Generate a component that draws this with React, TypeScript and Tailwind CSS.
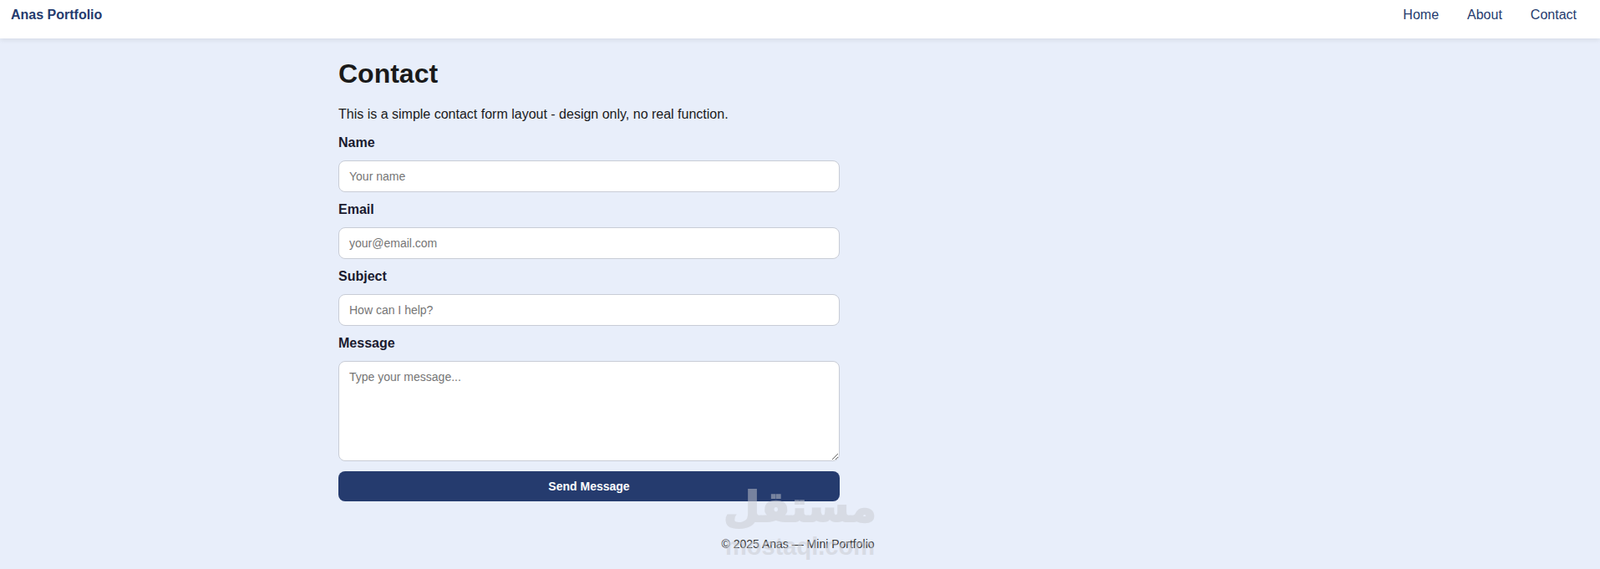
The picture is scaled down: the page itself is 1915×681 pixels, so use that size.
const fieldClass =
  'block w-full h-[38px] rounded-lg border border-[#c8ccd6] bg-white px-3 text-sm text-[#1a1a1a] placeholder:text-[#757575] outline-none';

const labelClass = 'block h-[24px] text-[16px] leading-[24px] font-bold text-[#1a1a2e]';

const FIELDS = [
  { label: 'Name', placeholder: 'Your name', type: 'text' },
  { label: 'Email', placeholder: 'your@email.com', type: 'email' },
  { label: 'Subject', placeholder: 'How can I help?', type: 'text' },
];

const App = () => {
  return (
    <div className="relative min-h-[681px] overflow-hidden bg-[#e8eefa] font-['Liberation_Sans',Arial,sans-serif] text-[#1a1a1a]">
      {/* Navbar */}
      <nav className="flex h-[46px] items-start justify-between bg-white pl-[13px] pr-[28px] shadow-[0_2px_6px_rgba(0,0,0,0.08)]">
        <a className="mt-[9px] text-[16px] leading-[18px] font-bold text-[#253b6e]">Anas Portfolio</a>
        <div className="mt-[9px] flex gap-[34px] text-[16px] leading-[18px] text-[#253b6e]">
          <a>Home</a>
          <a>About</a>
          <a>Contact</a>
        </div>
      </nav>

      {/* Form */}
      <main className="ml-[405px] w-[600px] pt-[24px]">
        <h1 className="text-[32px] leading-[37px] font-bold text-[#1a1a1a]">Contact</h1>
        <p className="mt-[21px] text-[16px] leading-[18px]">
          This is a simple contact form layout - design only, no real function.
        </p>
        <form className="mt-[13px]">
          {FIELDS.map((field) => (
            <div key={field.label} className="mb-[9px]">
              <label className={labelClass}>{field.label}</label>
              <input type={field.type} placeholder={field.placeholder} className={`${fieldClass} mt-[9px]`} />
            </div>
          ))}
          <label className={labelClass}>Message</label>
          <textarea
            placeholder="Type your message..."
            className="mt-[9px] block h-[120px] w-full rounded-lg border border-[#c8ccd6] bg-white px-3 py-2 text-sm text-[#1a1a1a] placeholder:text-[#757575] outline-none"
          />
          <button
            type="button"
            className="mt-[12px] block h-[36px] w-full rounded-lg bg-[#253b6e] text-sm font-bold text-white"
          >
            Send Message
          </button>
        </form>
      </main>

      {/* Footer */}
      <footer className="mt-[43px] pr-[5px] text-center text-sm leading-[16px] text-[#333]">© 2025 Anas — Mini Portfolio</footer>

      {/* Watermark */}
      <div className="pointer-events-none absolute left-[865px] top-[575px] flex w-[185px] flex-col items-center text-[#c8cad0] opacity-50">
        <span className="font-['DejaVu_Sans',sans-serif] text-[50px] leading-[65px] font-bold [-webkit-text-stroke:2px_#c8cad0]">مستقل</span>
        <span className="font-['Liberation_Sans',sans-serif] text-[29px] leading-[28px] font-bold">mostaql.com</span>
      </div>
    </div>
  );
};

export default App;
